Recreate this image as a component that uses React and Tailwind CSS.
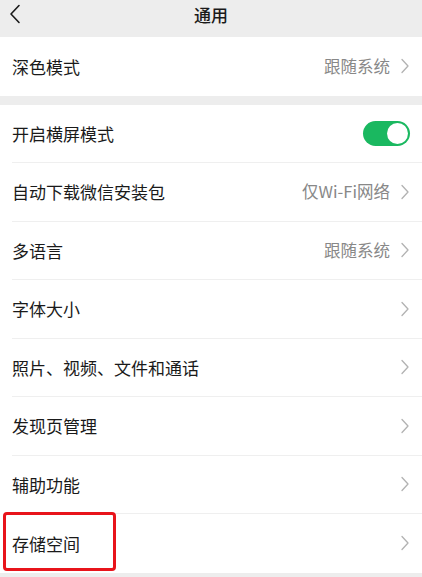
import React from "react";

const Chevron = () => (
  <svg width="10" height="16" viewBox="0 0 10 16" className="ml-[10px] shrink-0">
    <path d="M2 1.5 L8 8 L2 14.5" fill="none" stroke="#b2b2b2" strokeWidth="1.3" strokeLinecap="round" strokeLinejoin="round" />
  </svg>
);

const Toggle = () => (
  <div className="w-[47px] h-[25px] rounded-full bg-[#1ab860] flex items-center justify-end pr-[2px]">
    <div className="w-[21px] h-[21px] rounded-full bg-white" />
  </div>
);

const Row = ({ label, value, toggle, last, highlight }) => (
  <div className="relative pl-3 bg-white h-[58.5px]">
    <div className={`flex items-center h-full pr-3 ${last ? "" : "border-b border-[#efefef]"}`}>
      <span className="flex-1 text-[17px] text-[#1a1a1a]">{label}</span>
      {value && <span className="text-[16.5px] text-[#888888]">{value}</span>}
      {toggle ? <Toggle /> : <Chevron />}
    </div>
    {highlight && (
      <div className="absolute left-[3px] top-[-2px] w-[113px] h-[59px] border-[3px] border-[#e8141b] rounded-[4px]" />
    )}
  </div>
);

const items = [
  { label: "开启横屏模式", toggle: true },
  { label: "自动下载微信安装包", value: "仅Wi-Fi网络" },
  { label: "多语言", value: "跟随系统" },
  { label: "字体大小" },
  { label: "照片、视频、文件和通话" },
  { label: "发现页管理" },
  { label: "辅助功能" },
  { label: "存储空间", highlight: true, last: true },
];

export default function App() {
  return (
    <div
      className="w-[422px] h-[577px] overflow-hidden bg-[#ededed]"
      style={{ fontFamily: '"Noto Sans CJK SC", "Noto Sans", sans-serif' }}
    >
      <div className="relative h-[37px] flex items-center justify-center">
        <svg width="14" height="22" viewBox="0 0 14 22" className="absolute left-[8px] top-[3px]">
          <path d="M11 2.5 L3 11 L11 19.5" fill="none" stroke="#1a1a1a" strokeWidth="1.6" strokeLinecap="round" strokeLinejoin="round" />
        </svg>
        <span className="text-[17px] font-medium text-[#1a1a1a] -mt-[8px]">通用</span>
      </div>

      <div className="bg-white">
        <Row label="深色模式" value="跟随系统" last />
      </div>

      <div className="mt-[9px] bg-white">
        {items.map((it) => (
          <Row key={it.label} {...it} />
        ))}
      </div>
    </div>
  );
}
